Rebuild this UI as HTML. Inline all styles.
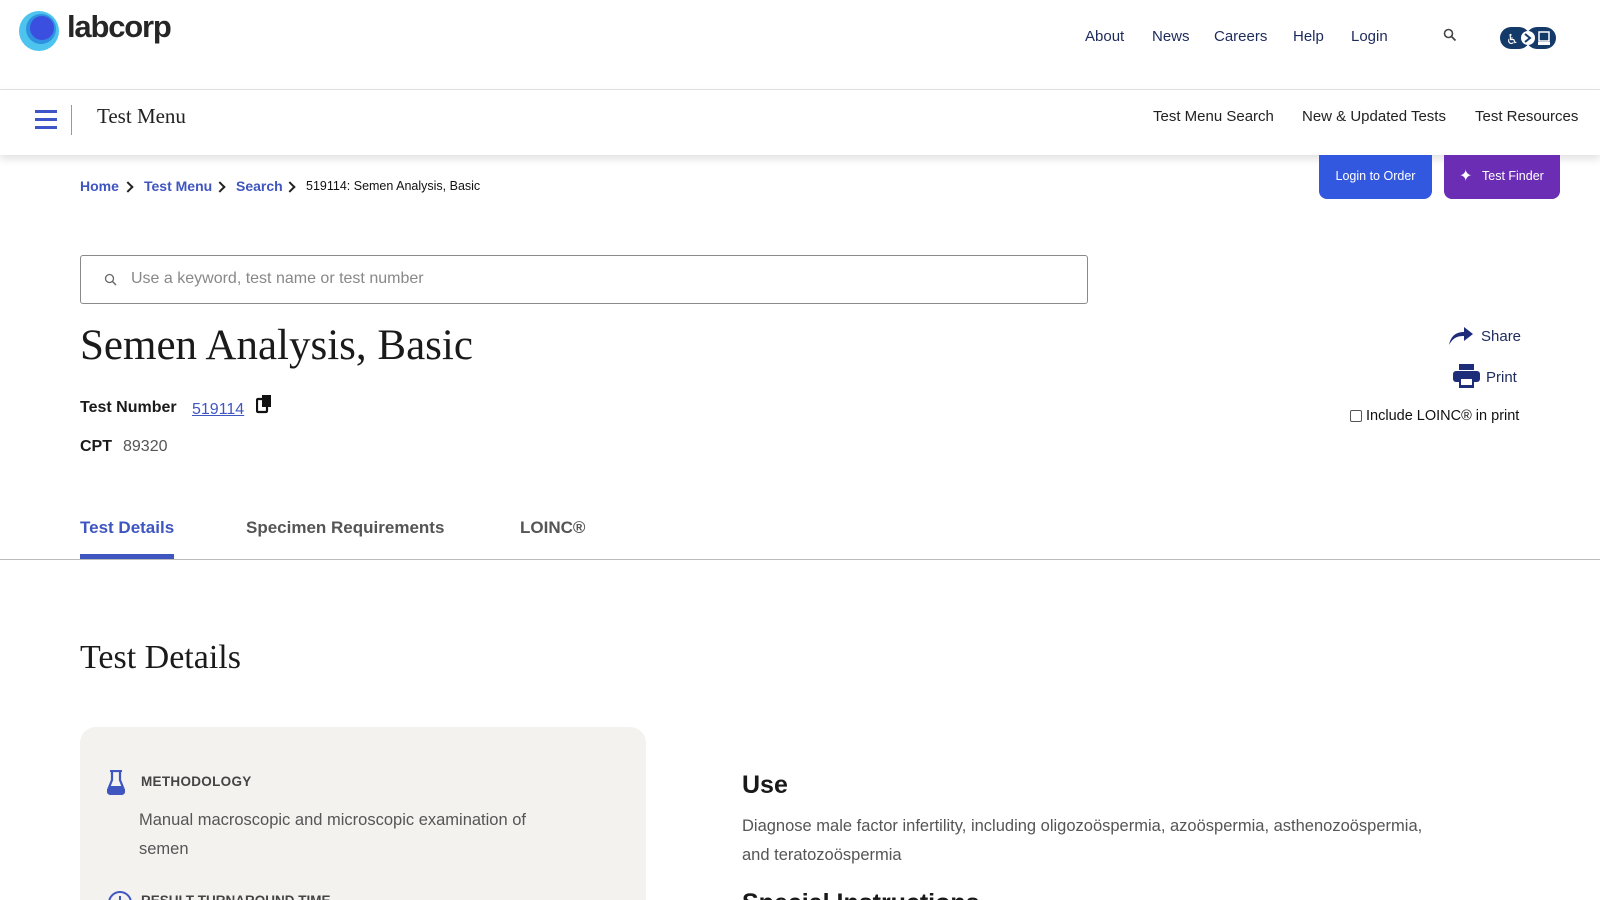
<!DOCTYPE html>
<html style="width:1600px;height:900px;overflow:hidden"><head><meta charset="utf-8"><style>
*{margin:0;padding:0;box-sizing:border-box}
body{width:1600px;height:900px;overflow:hidden;background:#fff;font-family:"Liberation Sans",sans-serif;position:relative;color:#1a1a1a}
.a{position:absolute;white-space:nowrap}
.serif{font-family:"Liberation Serif",serif}
.nav{font-size:15px;color:#1d2a5c;top:28px}
.sub{font-size:15px;color:#222;top:108px}
.bc{font-size:14px;top:178px;color:#3f55c0;font-weight:bold}
.chev{width:8px;height:8px;border-right:2px solid #222;border-top:2px solid #222;transform:rotate(45deg);top:183px}
</style></head><body>
<svg class="a" style="left:18px;top:10px" width="44" height="42" viewBox="0 0 44 42"><circle cx="21" cy="21" r="20" fill="#4dc4ee"/><circle cx="23" cy="19" r="15" fill="#2f8fe0"/><circle cx="24" cy="18" r="12" fill="#3a4fe0"/></svg>
<div class="a" style="left:67px;top:9px;font-size:31px;font-weight:bold;color:#262626;letter-spacing:-1.2px">labcorp</div>
<div class="a nav" style="left:1085px">About</div>
<div class="a nav" style="left:1152px">News</div>
<div class="a nav" style="left:1214px">Careers</div>
<div class="a nav" style="left:1293px">Help</div>
<div class="a nav" style="left:1351px">Login</div>
<svg class="a" style="left:1443px;top:28px" width="14" height="14" viewBox="0 0 14 14"><circle cx="5.5" cy="5.5" r="4" fill="none" stroke="#444" stroke-width="1.6"/><path d="M8.5 8.5L12.5 12.5" stroke="#444" stroke-width="1.8"/></svg>
<svg class="a" style="left:1500px;top:26px" width="58" height="24" viewBox="0 0 58 24"><rect x="0" y="1" width="30" height="22" rx="11" fill="#143a6a"/><rect x="26" y="1" width="30" height="22" rx="11" fill="#143a6a"/><circle cx="28" cy="12" r="7" fill="#fff"/><path d="M25 8l5 4-5 4" stroke="#143a6a" stroke-width="2" fill="none"/><text x="6" y="18" fill="#fff" font-size="14" font-family="DejaVu Sans">♿</text><rect x="39" y="6" width="10" height="9" fill="none" stroke="#fff" stroke-width="1.5"/><rect x="38" y="16" width="12" height="3" fill="#fff"/></svg>
<div class="a" style="left:0;top:89px;width:1600px;height:1px;background:#e4e4e4"></div>
<div class="a" style="left:0;top:90px;width:1600px;height:65px;background:#fff;box-shadow:0 4px 8px rgba(0,0,0,.12)"></div>
<div class="a" style="left:35px;top:110px;width:22px;height:3px;background:#3e55c8;box-shadow:0 8px 0 #3e55c8,0 16px 0 #3e55c8"></div>
<div class="a" style="left:71px;top:105px;width:1px;height:30px;background:#999"></div>
<div class="a serif" style="left:97px;top:104px;font-size:21px;color:#222">Test Menu</div>
<div class="a sub" style="left:1153px">Test Menu Search</div>
<div class="a sub" style="left:1302px">New &amp; Updated Tests</div>
<div class="a sub" style="left:1475px">Test Resources</div>
<div class="a" style="left:1319px;top:155px;width:113px;height:44px;background:#3358e0;border-radius:0 0 8px 8px;color:#fff;font-size:12.5px;text-align:center;line-height:42px">Login to Order</div>
<div class="a" style="left:1444px;top:155px;width:116px;height:44px;background:#6a2db3;border-radius:0 0 8px 8px;color:#fff;font-size:12.5px;line-height:42px;padding-left:38px">Test Finder</div>
<div class="a" style="left:1459px;top:166px;color:#fff;font-size:16px">✦</div>
<div class="a bc" style="left:80px">Home</div><div class="a chev" style="left:124px"></div>
<div class="a bc" style="left:144px">Test Menu</div><div class="a chev" style="left:216px"></div>
<div class="a bc" style="left:236px">Search</div><div class="a chev" style="left:286px"></div>
<div class="a" style="left:306px;top:179px;font-size:12.5px;color:#111">519114: Semen Analysis, Basic</div>
<div class="a" style="left:80px;top:255px;width:1008px;height:49px;border:1px solid #8a8a8a;border-radius:3px"></div>
<svg class="a" style="left:104px;top:273px" width="13" height="13" viewBox="0 0 13 13"><circle cx="5.5" cy="5.5" r="4" fill="none" stroke="#666" stroke-width="1.3"/><path d="M8.5 8.5L12 12" stroke="#666" stroke-width="1.4"/></svg>
<div class="a" style="left:131px;top:270px;font-size:16px;color:#888">Use a keyword, test name or test number</div>
<div class="a serif" style="left:80px;top:321px;font-size:43px;color:#1a1a1a">Semen Analysis, Basic</div>
<div class="a" style="left:80px;top:399px;font-size:16px;font-weight:bold">Test Number</div>
<div class="a" style="left:192px;top:401px;font-size:16px;color:#3f55c0;text-decoration:underline">519114</div>
<svg class="a" style="left:256px;top:394px" width="18" height="20" viewBox="0 0 18 20"><rect x="1" y="5" width="10" height="13" rx="1" fill="none" stroke="#111" stroke-width="2.2"/><path d="M6 1h9v12H6z" fill="#111"/></svg>
<div class="a" style="left:80px;top:438px;font-size:16px;font-weight:bold">CPT</div>
<div class="a" style="left:123px;top:438px;font-size:16px;color:#555">89320</div>
<svg class="a" style="left:1448px;top:324px" width="26" height="22" viewBox="0 0 26 22"><path d="M1 21C3 11 9 8 16 8V3l9 7-9 7v-5C9 12 5 14 1 21z" fill="#1e2d7a"/></svg>
<div class="a" style="left:1481px;top:328px;font-size:15px;color:#1d2a5c">Share</div>
<svg class="a" style="left:1453px;top:364px" width="27" height="24" viewBox="0 0 27 24"><rect x="6" y="0" width="15" height="6" fill="#1e2d7a"/><rect x="0" y="7" width="27" height="11" rx="3" fill="#1e2d7a"/><rect x="6" y="13" width="15" height="11" fill="#1e2d7a"/><rect x="8" y="15" width="11" height="6" fill="#fff"/></svg>
<div class="a" style="left:1486px;top:369px;font-size:15px;color:#1d2a5c">Print</div>
<div class="a" style="left:1350px;top:410px;width:12px;height:12px;border:1px solid #555;border-radius:2px"></div>
<div class="a" style="left:1366px;top:408px;font-size:14.5px;color:#111">Include LOINC® in print</div>
<div class="a" style="left:80px;top:518px;font-size:17px;font-weight:bold;color:#3f55c0">Test Details</div>
<div class="a" style="left:246px;top:518px;font-size:17px;font-weight:bold;color:#555">Specimen Requirements</div>
<div class="a" style="left:520px;top:518px;font-size:17px;font-weight:bold;color:#555">LOINC®</div>
<div class="a" style="left:0;top:559px;width:1600px;height:1px;background:#bbb"></div>
<div class="a" style="left:80px;top:554px;width:94px;height:5px;background:#3f55c0"></div>
<div class="a serif" style="left:80px;top:639px;font-size:34px;color:#1a1a1a">Test Details</div>
<div class="a" style="left:80px;top:727px;width:566px;height:173px;background:#f3f2ef;border-radius:16px 16px 0 0"></div>
<svg class="a" style="left:107px;top:770px" width="18" height="25" viewBox="0 0 18 25"><path d="M3 1h12M5 1v9L1 20a3 3 0 0 0 3 4h10a3 3 0 0 0 3-4L13 10V1" fill="none" stroke="#3f55c0" stroke-width="2.2"/><path d="M3 16h12l2 5a2 2 0 0 1-2 3H3a2 2 0 0 1-2-3z" fill="#3f55c0"/></svg>
<div class="a" style="left:141px;top:774px;font-size:13.5px;font-weight:bold;color:#444;letter-spacing:.3px">METHODOLOGY</div>
<div class="a" style="left:139px;top:806px;font-size:16.5px;color:#555;line-height:29px;white-space:normal;width:440px">Manual macroscopic and microscopic examination of semen</div>
<svg class="a" style="left:107px;top:890px" width="26" height="26" viewBox="0 0 26 26"><circle cx="13" cy="13" r="11" fill="none" stroke="#3f55c0" stroke-width="2"/><path d="M13 6v7" stroke="#3f55c0" stroke-width="2"/></svg>
<div class="a" style="left:141px;top:893px;font-size:13.5px;font-weight:bold;color:#444">RESULT TURNAROUND TIME</div>
<div class="a" style="left:742px;top:771px;font-size:25px;font-weight:bold;color:#1a1a1a">Use</div>
<div class="a" style="left:742px;top:812px;font-size:16.5px;color:#555;line-height:29px;white-space:normal;width:700px">Diagnose male factor infertility, including oligozoöspermia, azoöspermia, asthenozoöspermia, and teratozoöspermia</div>
<div class="a" style="left:742px;top:889px;font-size:25px;font-weight:bold;color:#1a1a1a">Special Instructions</div>
</body></html>
